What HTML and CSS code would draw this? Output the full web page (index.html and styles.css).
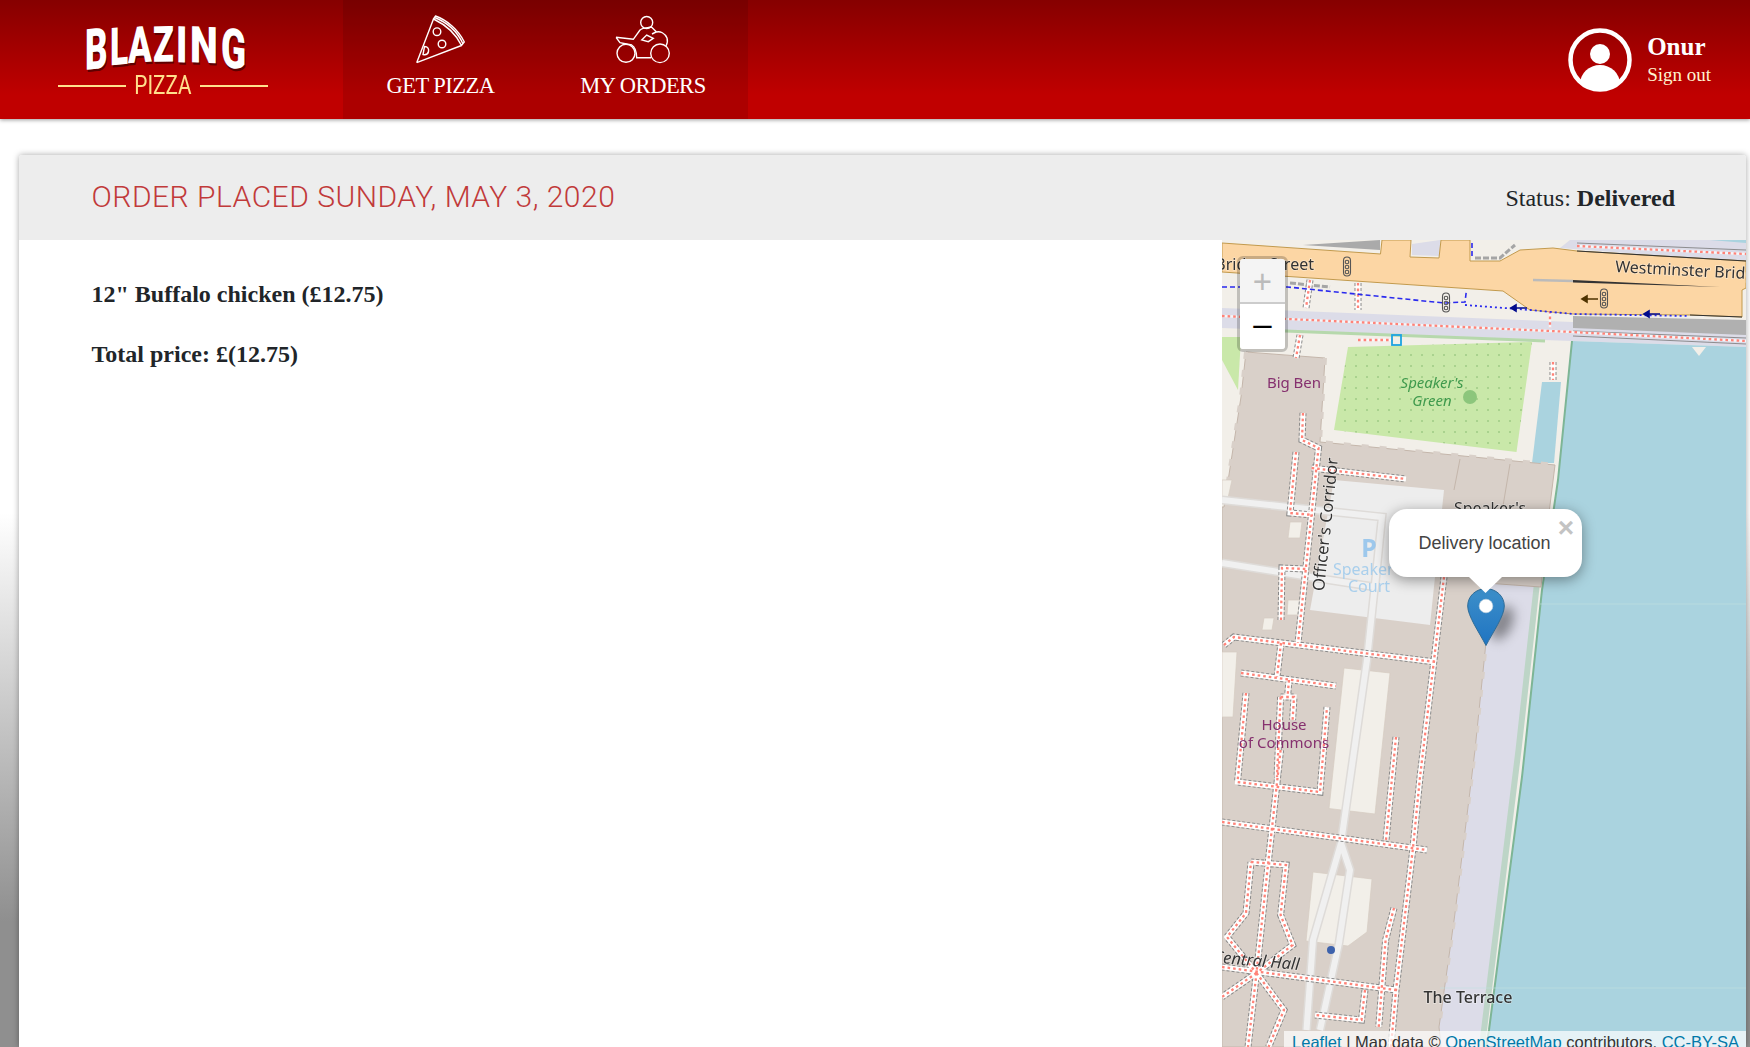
FILE: index.html
```html
<!DOCTYPE html>
<html lang="en">
<head>
<meta charset="utf-8">
<title>Blazing Pizza</title>
<link rel="stylesheet" href="styles.css">
</head>
<body>
<header class="topbar">
  <a class="logo">
    <div class="logo-word"><span>B</span><span>L</span><span>A</span><span>Z</span><span>I</span><span>N</span><span>G</span></div>
    <div class="logo-sub"><i></i><span>PIZZA</span><i></i></div>
  </a>
  <nav class="nav">
    <a class="nav-item nav-pizza">
      <svg class="nav-icon" viewBox="414 14 54 52" width="54" height="52">
        <path d="M416.7 62.7 433.5 19 M416.7 62.7 461.5 45.5 M433.5 19 435.5 16C447 20 458.5 30 464.3 42L461.5 45.5C456 34 445 24.5 433.5 19ZM434.5 17.5C446 22 457 31 462.8 43.5" />
        <circle cx="437" cy="31.7" r="3.8"/><circle cx="442" cy="44" r="3.8"/>
        <path d="M424.5 46.5C428 46.5 429 49 428.5 51.5C428 54 425.5 55 423 54.5Z"/>
      </svg>
      <span>GET PIZZA</span>
    </a>
    <a class="nav-item nav-orders">
      <svg class="nav-icon" viewBox="614 14 58 52" width="58" height="52">
        <circle cx="626" cy="53.3" r="9"/><circle cx="660" cy="53.3" r="9.3"/><circle cx="646.7" cy="22.5" r="6"/>
        <path d="M616 37.3 633.3 39.3 640 30C643 27.5 648 28 651.5 27L656.5 32C660 31 665 33 667 38C668 41 667 44 666 46M616 37.3 620 42.7 631.7 45C635 47 636.5 50 636.7 57.7H651M652 34 656 32"/>
        <path d="M641.7 40 646.7 35 653.3 38.3 648.3 41.7Z"/>
      </svg>
      <span>MY ORDERS</span>
    </a>
  </nav>
  <div class="user">
    <svg class="avatar" viewBox="0 0 64 64" width="64" height="64">
      <defs><clipPath id="face"><circle cx="32" cy="32" r="29"/></clipPath></defs>
      <circle class="avatar-ring" cx="32" cy="32" r="29.5"/>
      <circle class="avatar-fill" cx="32" cy="26" r="10"/>
      <ellipse class="avatar-fill" cx="32" cy="56" rx="20" ry="19" clip-path="url(#face)"/>
    </svg>
    <div class="user-text">
      <strong>Onur</strong>
      <a>Sign out</a>
    </div>
  </div>
</header>

<main class="content">
  <section class="panel">
    <div class="panel-head">
      <h2>ORDER PLACED SUNDAY, MAY 3, 2020</h2>
      <p>Status: <strong>Delivered</strong></p>
    </div>
    <div class="panel-body">
      <div class="items">
        <p>12" Buffalo chicken (£12.75)</p>
        <p>Total price: £(12.75)</p>
      </div>
      <div class="map">
        <svg class="tiles" viewBox="1222 240 524 807" width="524" height="807">
          <defs>
            <pattern id="dots" width="11" height="11" patternUnits="userSpaceOnUse">
              <circle cx="3" cy="3" r=".8" fill="#7fb56b"/>
            </pattern>
            <path id="foot" d="M1303 413 1302 440 1318.5 448 1298 643M1296 452 1290 513 1313 515M1311.6 468 1406 479M1224 645 1234 637 1435.6 662M1444 577 1420 777 1413 848 1396 990 1391 1047M1281 620 1282 568 1306 569M1281 643 1277 677M1241 673 1336 686M1289 680 1287.5 697M1280.6 697H1294L1292.6 720M1280.6 697 1277 777M1246 693 1237.5 782 1320 792 1327 707M1396 737 1386 840M1222 822 1427 850M1280.6 750 1268.5 860 1256.5 973 1248 1047M1251 862 1286 865 1280.6 915 1292.6 945 1256.5 973 1227 937 1246 913 1251 862M1256.5 973 1222 997M1256.5 973 1284 1010 1268.6 1047M1222 967 1396 990M1365 990 1361.5 1020 1315 1015M1394 908 1385.6 940 1378.7 1027M1553 362 1553 380M1358 283 1358 310M1310 280 1306 308M1300 335 1296 358"/>
            <path id="roadline" d="M1222 316 1572 332 1746 341M1577 246 1746 254M1358 340 1393 340M1550 311 1550 328"/>
          </defs>
          <rect class="land" x="1222" y="240" width="524" height="807"/>
          <path class="concrete-thin" d="M1303 245 1380 240V250Z"/>
          <path class="bridge" d="M1412 244 1440 240V256L1412 255Z"/>
          <path class="bridge" d="M1222 308 1572 322 1746 330V347L1572 341 1222 328Z"/>
          <path class="bridge" d="M1570 240H1746V262L1560 248Z"/>
          <path class="water" d="M1710 240H1746V243Z"/>
          <path class="concrete" d="M1573 316 1746 320V335L1573 328Z"/>
          <path class="grass-line" d="M1285 331 1545 341"/>
          <path class="grass" d="M1222 337H1241L1238 390 1222 360Z"/>
          <path class="grass" d="M1348 347 1532 342 1516.5 452 1334 430Z"/>
          <path class="dots" d="M1348 347 1532 342 1516.5 452 1334 430Z"/>
          <circle class="tree" cx="1470" cy="397" r="7"/>
          <path class="water" d="M1542 382H1561L1554 463H1532Z"/>
          <path class="water" d="M1572 341 1746 347V1047H1486L1489 1030 1525 750 1542 590 1558 480Z"/>
          <path class="notch" d="M1692 347H1706L1699 356Z"/>
          <path class="bank" d="M1572 341 1558 480 1542 590 1522 777 1489 1030 1486 1047"/>
          <path class="terrace" d="M1485 583H1535L1516.5 750 1482 1030 1480 1047H1441L1439 1027 1454.5 917 1475 750 1485 647Z"/>
          <path class="terrace-edge" d="M1535 583 1516.5 750 1482 1030 1480 1047"/>
          <path class="building" d="M1246 352 1325 358 1320 442 1555 465 1549 513 1541 587 1485.5 583V647L1475 750 1454.5 917 1439 1027 1441 1047H1222V507L1224 507 1241 397Z"/>
          <path class="building-bump" d="M1246 352 1241 397 1224 507M1325 358 1320 442 1555 465M1485.5 600V647L1475 750 1454.5 917 1439 1027"/>
          <path class="wall" d="M1460 459 1454 490M1510 464 1503 506"/>
          <path class="beige" d="M1222 652H1237L1233 717H1222ZM1222 480H1232L1228 498H1222ZM1344 668 1390 673 1375 814 1329 808.5ZM1313 872 1372 879 1367 932 1348 946 1306 941ZM1290 522H1302L1300 538H1288ZM1288 600H1300L1298 615H1287ZM1264 618H1274L1272 630H1262Z"/>
          <path class="court" d="M1334 480 1444 490 1430 625 1310 610Z"/>
          <path class="service" d="M1222 500 1382 517 1375 587 1310 577 1222 563M1382 517 1367 660 1341 843 1313 940 1306.5 1030M1341 843 1350 870 1339 943 1320 1030"/>
          <path class="service-in" d="M1222 500 1382 517 1375 587 1310 577 1222 563M1382 517 1367 660 1341 843 1313 940 1306.5 1030M1341 843 1350 870 1339 943 1320 1030"/>
          <path class="road" d="M1222 243 1380.5 254 1382 240H1411L1410 257 1439 258 1441 240H1470V261H1500L1520 250 1553 248 1577 251 1746 261V288L1742 290V317L1690 315 1573 314 1530 310 1503 291 1222 272Z"/>
          <path class="road-dark" d="M1573 280 1720 287 1573 282.5Z"/>
          <path class="road-grey" d="M1533 280 1573 281"/>
          <path class="bridge-dark" d="M1577 251 1746 261M1690 315 1742 317"/>
          <path class="bridge-thin" d="M1577 243 1746 250M1573 331 1746 338M1573 336 1746 344"/>
          <path class="gravel" d="M1475 258H1500L1515 245M1290 283 1330 287"/>
          <use href="#foot" class="foot-case"/><use href="#foot" class="foot-white"/><use href="#foot" class="foot-red"/>
          <use href="#roadline" class="foot-white-thin"/><use href="#roadline" class="foot-red"/>
          <path class="blue-dash" d="M1222 287 1287.5 287 1444 303 1465 302 1466.5 290M1472 243V258"/>
          <path class="blue-dot" d="M1465 305 1530 310 1573 314 1689 316"/>
          <path class="blue-arrow" d="M1527 308H1511M1511 308 1516 305V311ZM1660 314H1644M1644 314 1649 311V317Z"/>
          <path class="brown-arrow" d="M1598 299H1582M1582 299 1587 296V302Z"/>
          <g class="signals">
            <rect x="1343.5" y="257" width="7" height="19" rx="3.5"/><circle cx="1347" cy="262" r="1.8"/><circle cx="1347" cy="267" r="1.8"/><circle cx="1347" cy="272" r="1.8"/>
            <rect x="1442.5" y="293" width="7" height="19" rx="3.5"/><circle cx="1446" cy="298" r="1.8"/><circle cx="1446" cy="303" r="1.8"/><circle cx="1446" cy="308" r="1.8"/>
            <rect x="1600.5" y="289" width="7" height="19" rx="3.5"/><circle cx="1604" cy="294" r="1.8"/><circle cx="1604" cy="299" r="1.8"/><circle cx="1604" cy="304" r="1.8"/>
          </g>
          <rect class="entrance" x="1392" y="335" width="9" height="10"/>
          <circle class="dot-blue" cx="1331" cy="950" r="4"/>
          <line class="seam" x1="1540" y1="604" x2="1746" y2="604"/>
          <line class="seam" x1="1440" y1="988" x2="1746" y2="988"/>
          <text class="lbl lbl-end" x="1314" y="270">Bridge Street</text>
          <text class="lbl lbl-west" transform="translate(1615 272) rotate(3)">Westminster Bridge</text>
          <text class="lbl-poi lbl-mid" x="1294" y="388">Big Ben</text>
          <text class="lbl-green lbl-mid" x="1432" y="388">Speaker's</text>
          <text class="lbl-green lbl-mid" x="1432" y="406">Green</text>
          <text class="lbl lbl-mid lbl-officer" transform="translate(1331 525) rotate(-84)">Officer's Corridor</text>
          <text class="lbl-p lbl-mid" x="1369" y="557">P</text>
          <text class="lbl-park lbl-mid" x="1369" y="575">Speaker's</text>
          <text class="lbl-park lbl-mid" x="1369" y="592">Court</text>
          <text class="lbl lbl-mid" x="1490" y="514">Speaker's</text>
          <text class="lbl-poi lbl-mid" x="1284" y="730">House</text>
          <text class="lbl-poi lbl-mid" x="1284" y="748">of Commons</text>
          <text class="lbl lbl-end lbl-it" transform="translate(1299 970) rotate(5)">Central Hall</text>
          <text class="lbl lbl-mid lbl-terrace" x="1468" y="1003">The Terrace</text>
        </svg>
        <div class="zoom">
          <a class="zoom-in">+</a>
          <a class="zoom-out">–</a>
        </div>
        <div class="pin-shadow"></div>
        <svg class="pin" viewBox="0 0 38 58" width="38" height="58">
          <defs>
            <linearGradient id="pinfill" x1="0" y1="0" x2="0" y2="1">
              <stop offset="0" stop-color="#3d8fc9"/><stop offset="1" stop-color="#1f74c2"/>
            </linearGradient>
          </defs>
          <path class="pin-body" d="M19 .7C9 .7.7 8 .7 18 .7 28 12 44 19 57.5 26 44 37.3 28 37.3 18 37.3 8 29 .7 19 .7Z"/>
          <circle class="pin-dot" cx="19" cy="18" r="6.8"/>
        </svg>
        <div class="popup">
          <a class="popup-close">×</a>
          <span>Delivery location</span>
          <i class="popup-tip"></i>
        </div>
        <div class="attrib"><a>Leaflet</a> | Map data © <a>OpenStreetMap</a> contributors, <a>CC-BY-SA</a></div>
      </div>
    </div>
  </section>
</main>
</body>
</html>
```
FILE: styles.css
```css
* { box-sizing: border-box; }
html, body { height: 100%; }
body {
  margin: 0;
  height: 100vh;
  overflow: hidden;
  display: flex;
  flex-direction: column;
  font-family: "Liberation Serif", serif;
  color: #212529;
  background: linear-gradient(#fff 49%, #8f8f8f 88%);
}
p, h2 { margin: 0; }

.topbar {
  flex: none;
  height: 119px;
  display: flex;
  align-items: stretch;
  color: #fff;
  background: linear-gradient(#860000, #c00000 80%);
  box-shadow: 0 1px 4px rgba(0, 0, 0, .4);
  position: relative;
  z-index: 2;
}
.logo {
  width: 343px;
  flex: none;
  padding: 20px 0 0 58px;
}
.logo-word {
  display: flex;
  padding-left: 27px;
  height: 55px;
  align-items: flex-start;
  font-family: "Roboto", sans-serif;
  font-weight: 900;
  font-size: 46px;
  line-height: 46px;
  text-shadow: 1px 2px 0 #5e0000;
}
.logo-word span {
  display: block;
  flex: none;
  transform-origin: 0 6px;
}
.logo-word span:nth-child(1) { width: 25px; transform: translateY(3px) skewY(-6deg) scale(.76, 1.24); }
.logo-word span:nth-child(2) { width: 18px; transform: translateY(2px) skewY(-6deg) scale(.73, 1.14); }
.logo-word span:nth-child(3) { width: 25px; transform: translateY(1px) skewY(-4deg) scale(.76, 1.1); }
.logo-word span:nth-child(4) { width: 23px; transform: skewY(-1deg) scale(.74, 1.08); }
.logo-word span:nth-child(5) { width: 14px; transform: skewY(1deg) scale(.82, 1.1); }
.logo-word span:nth-child(6) { width: 31px; transform: skewY(2deg) scale(.86, 1.1); }
.logo-word span:nth-child(7) { width: 24px; transform: translateY(1px) skewY(7deg) scale(.8, 1.2); }
.logo-sub {
  display: flex;
  align-items: center;
  width: 210px;
  height: 20px;
  padding-top: 1px;
  color: #ffe08c;
  font-family: "Roboto", sans-serif;
  font-size: 25px;
  line-height: 20px;
}
.logo-sub span {
  flex: none;
  width: 74px;
  text-align: center;
  transform: scaleX(.83);
}
.logo-sub i {
  flex: 1;
  height: 2px;
  background: #ffe08c;
}

.nav {
  display: flex;
  background: rgba(0, 0, 0, .1);
}
.nav-item {
  display: flex;
  flex-direction: column;
  align-items: center;
  padding-top: 14px;
  font-size: 22.5px;
  letter-spacing: -.5px;
}
.nav-pizza { width: 195px; }
.nav-orders { width: 210px; }
.nav-icon {
  display: block;
  height: 52px;
  fill: none;
  stroke: #fff;
  stroke-width: 1.4;
}
.nav-item span { margin-top: 7px; }

.user {
  margin-left: auto;
  display: flex;
  align-items: center;
  padding: 0 39px 0 0;
  gap: 15px;
}
.avatar { display: block; }
.avatar-ring { fill: none; stroke: #fff; stroke-width: 4.5; }
.avatar-fill { fill: #fff; }
.user-text {
  display: flex;
  flex-direction: column;
  gap: 4px;
  padding-top: 1px;
}
.user-text strong { font-size: 25px; line-height: 26px; }
.user-text a { font-size: 19px; line-height: 22px; color: #fff4d0; }

.content {
  flex: 1;
  min-height: 0;
  padding: 36px 4px 0 19px;
}
.panel {
  height: 100%;
  display: flex;
  flex-direction: column;
  background: #fff;
  border-radius: 3px 3px 0 0;
  box-shadow: 0 0 6px rgba(0, 0, 0, .35);
}
.panel-head {
  flex: none;
  height: 85px;
  padding: 0 71px 0 72.5px;
  display: flex;
  align-items: center;
  justify-content: space-between;
  background: #ededed;
  border-radius: 3px 3px 0 0;
}
.panel-head h2 {
  font-family: "Roboto", "Liberation Sans", sans-serif;
  font-weight: 300;
  font-size: 30px;
  letter-spacing: .5px;
  color: #c13a3a;
  margin-top: -2px;
}
.panel-head p { font-size: 24px; margin-top: 1px; }
.panel-body {
  flex: 1;
  min-height: 0;
  display: flex;
}
.items {
  flex: 1;
  padding: 39px 73px 0 72.5px;
  font-size: 24px;
  font-weight: 700;
  line-height: 30px;
}
.items p { margin-bottom: 30px; }

.map {
  flex: none;
  width: 524px;
  position: relative;
  overflow: hidden;
  background: #f2efe9;
  font-family: "Liberation Sans", sans-serif;
}
.tiles { display: block; filter: blur(.55px); }
.land { fill: #f2efe9; }
.bridge { fill: #dcdce8; }
.concrete { fill: #b0b0b0; }
.concrete-thin { fill: #aaa; }
.grass { fill: #c9e8a9; }
.grass-line { fill: none; stroke: #b6d8ac; stroke-width: 3; }
.dots { fill: url(#dots); }
.tree { fill: #8cc67c; }
.water { fill: #aad3df; }
.notch { fill: #f2efe9; }
.bank { fill: none; stroke: #7db595; stroke-width: 2; }
.terrace { fill: #dcdce8; }
.terrace-edge { fill: none; stroke: #bdd5c7; stroke-width: 6; transform: translateX(2px); }
.building { fill: #d9d0c9; stroke: #c4b6ab; stroke-width: 1; }
.building-bump { fill: none; stroke: #d9d0c9; stroke-width: 4; stroke-dasharray: 7 11; }
.wall { fill: none; stroke: #c4b6ab; stroke-width: 1; }
.beige { fill: #f2efe9; stroke: #d5cbc2; stroke-width: .7; }
.court { fill: #ededed; }
.service { fill: none; stroke: #dedbd8; stroke-width: 9; }
.service-in { fill: none; stroke: #f0f0f0; stroke-width: 6; }
.road { fill: #fcd6a4; stroke: #c29a4d; stroke-width: 1; }
.road-dark { fill: #333; }
.road-grey { fill: none; stroke: #bbb; stroke-width: 2.5; }
.bridge-dark { fill: none; stroke: #333; stroke-width: 1.2; }
.bridge-thin { fill: none; stroke: #777; stroke-width: .8; }
.gravel { fill: none; stroke: #a5a5a5; stroke-width: 3; stroke-dasharray: 6 2; }
.foot-case { fill: none; stroke: #888; stroke-width: 7; stroke-dasharray: 3 2; }
.foot-white { fill: none; stroke: #fff; stroke-width: 5; }
.foot-white-thin { fill: none; stroke: #fff; stroke-width: 2.4; opacity: .7; }
.foot-red { fill: none; stroke: #ff8378; stroke-width: 2.3; stroke-dasharray: 2.6 3; }
.blue-dash { fill: none; stroke: #2a2aee; stroke-width: 1.6; stroke-dasharray: 5 3; }
.blue-dot { fill: none; stroke: #2a2aee; stroke-width: 1.8; stroke-dasharray: 2 3; }
.blue-arrow { fill: #000a8c; stroke: #000a8c; stroke-width: 1.6; }
.brown-arrow { fill: #4e3300; stroke: #4e3300; stroke-width: 1.6; }
.signals { fill: none; stroke: #555; stroke-width: 1.1; }
.entrance { fill: none; stroke: #1da3e0; stroke-width: 1.8; }
.dot-blue { fill: #3d62ac; }
.seam { stroke: #c4e0e0; stroke-width: .6; }
.lbl, .lbl-poi, .lbl-green, .lbl-park {
  font-family: "Noto Sans", sans-serif;
  font-size: 16px;
}
.lbl { fill: #333; paint-order: stroke; stroke: rgba(255, 255, 255, .4); stroke-width: 1.5; }
.lbl-west { font-size: 16px; }
.lbl-officer { font-size: 16.5px; }
.lbl-poi { fill: #86316f; font-size: 15px; }
.lbl-green { fill: #3f9a4d; font-style: italic; font-size: 15px; }
.lbl-park { fill: #a9cfec; font-size: 16px; }
.lbl-p { fill: #9dc8ec; font-family: "Noto Sans", sans-serif; font-size: 25px; font-weight: 700; }
.lbl-mid { text-anchor: middle; }
.lbl-end { text-anchor: end; }
.lbl-it { font-style: italic; font-size: 16.5px; }
.lbl-terrace { font-weight: 500; }

.zoom {
  position: absolute;
  left: 15px;
  top: 16px;
  width: 51px;
  border: 3px solid rgba(0, 0, 0, .2);
  border-radius: 6px;
  background-clip: padding-box;
  overflow: hidden;
  font-family: "Liberation Sans", sans-serif;
  font-size: 33px;
  font-weight: 400;
  text-align: center;
}
.zoom a { display: block; height: 45px; line-height: 45px; background: #fff; }
.zoom-in { background: #f4f4f4 !important; color: #bbb; border-bottom: 2px solid #ccc; }
.zoom-out { color: #000; line-height: 39px !important; }

.pin {
  position: absolute;
  left: 244.5px;
  top: 348px;
}
.pin-body { fill: url(#pinfill); stroke: #2e6c97; stroke-width: 1; }
.pin-dot { fill: #fff; stroke: #c9d6e0; stroke-width: .6; }
.pin-shadow {
  position: absolute;
  left: 270px;
  top: 365px;
  width: 20px;
  height: 36px;
  background: rgba(0, 0, 0, .4);
  border-radius: 50%;
  filter: blur(6px);
  transform: rotate(25deg);
}
.popup {
  position: absolute;
  left: 167px;
  top: 269px;
  width: 193px;
  height: 68px;
  padding-right: 2px;
  display: flex;
  align-items: center;
  justify-content: center;
  background: #fff;
  border-radius: 18px;
  box-shadow: 0 3px 14px rgba(0, 0, 0, .4);
  color: #444;
  font-size: 18px;
}
.popup-tip {
  position: absolute;
  left: 80px;
  top: 68px;
  width: 33px;
  height: 16px;
  background: #fff;
  clip-path: polygon(0 0, 100% 0, 50% 100%);
}
.popup-close {
  position: absolute;
  right: 8px;
  top: 4px;
  color: #c3c3c3;
  font-size: 28px;
  font-weight: 700;
  line-height: 30px;
}
.attrib {
  position: absolute;
  right: 0;
  bottom: 0;
  height: 16px;
  padding: 0 7px 0 8px;
  overflow: hidden;
  line-height: 22px;
  font-size: 16.5px;
  color: #333;
  background: rgba(255, 255, 255, .7);
  white-space: nowrap;
}
.attrib a { color: #0078a8; }
```
